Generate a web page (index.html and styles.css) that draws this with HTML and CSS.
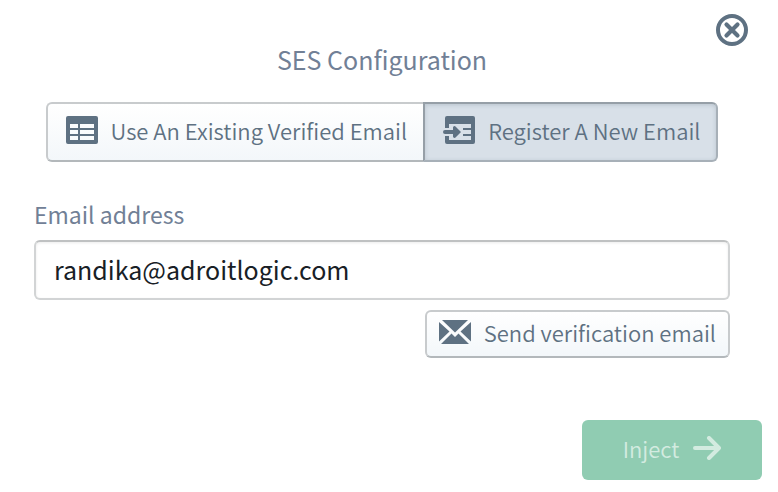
FILE: index.html
```html
<!DOCTYPE html>
<html lang="en">
<head>
<meta charset="utf-8">
<title>SES Configuration</title>
<link rel="stylesheet" href="styles.css">
</head>
<body>
<main class="dialog">
  <button class="close" type="button" aria-label="Close">
    <svg width="32" height="32" viewBox="0 0 32 32" fill="none" stroke="currentColor" stroke-width="4" stroke-linecap="round"><circle cx="16" cy="16" r="14"/><path stroke-width="4.200" d="M10.500 10.500l11 11M21.500 10.500l-11 11"/></svg>
  </button>
  <form class="form">
    <h1 class="title">SES Configuration</h1>
    <div class="tabs">
      <button class="btn tab" type="button" aria-pressed="false">
        <svg width="32" height="28" viewBox="0 0 32 28"><path fill="currentColor" fill-rule="evenodd" d="M2 0h28a2 2 0 0 1 2 2v24a2 2 0 0 1-2 2H2a2 2 0 0 1-2-2V2a2 2 0 0 1 2-2zM4 8v4h8V8zm10 0v4h14V8zM4 14v4h8v-4zm10 0v4h14v-4zM4 20v4h8v-4zm10 0v4h14v-4z"/></svg>
        <span>Use An Existing Verified Email</span>
      </button>
      <button class="btn tab active" type="button" aria-pressed="true">
        <svg width="32" height="28" viewBox="0 0 32 28"><path fill="currentColor" fill-rule="evenodd" d="M4 0h26a2 2 0 0 1 2 2v24a2 2 0 0 1-2 2H4a2 2 0 0 1-2-2v-6h4v4h22v-4h-8v-2h8v-4h-8v-2h8V8H6v4H2V2a2 2 0 0 1 2-2z"/><path fill="currentColor" d="M2 14h8v-2.500a1.500 1.500 0 0 1 2.500-1.100L18 16l-5.500 5.600a1.500 1.500 0 0 1-2.500-1.100V18H2a2 2 0 0 1 0-4z"/></svg>
        <span>Register A New Email</span>
      </button>
    </div>
    <label class="label" for="email">Email address</label>
    <input class="input" id="email" type="email" value="randika@adroitlogic.com">
    <button class="btn send" type="button">
      <svg width="32" height="24" viewBox="0 0 32 24" fill="currentColor"><path d="M3 0h26L16 12.500zM0 2l10.500 9.500L0 21.500zM32 2v19.500l-10.500-10zM2 24l10.500-10.500L16 17l3.500-3.500L30 24z"/></svg>
      <span>Send verification email</span>
    </button>
  </form>
  <button class="inject" type="button" disabled>
    <span>Inject</span>
    <svg width="28" height="24" viewBox="0 0 28 24" fill="none" stroke="currentColor" stroke-width="4" stroke-linecap="round" stroke-linejoin="round"><path d="M2 12h23M16 2l10 10-10 10"/></svg>
  </button>
</main>
</body>
</html>
```
FILE: styles.css
```css
* {
  box-sizing: border-box;
}

body {
  margin: 0;
  background: #fff;
  color: #5e7182;
  font: 400 22px/32px "Noto Sans CJK JP", "Noto Sans", sans-serif;
}

button,
input {
  margin: 0;
  font: inherit;
  color: inherit;
}

button {
  font-weight: 350;
}

svg {
  display: block;
  flex: none;
}

.dialog {
  position: relative;
  display: flex;
  flex-direction: column;
  padding: 43px 16px 12px;
}

.close {
  position: absolute;
  top: 14px;
  right: 30px;
  padding: 0;
  border: 0;
  background: none;
}

.form {
  display: flex;
  flex-direction: column;
  margin: 0 32px 62px 18px;
}

.title {
  margin: 0 0 27px;
  color: #718096;
  font-size: 25px;
  font-weight: 400;
  text-align: center;
}

.tabs {
  display: flex;
  justify-content: center;
  margin-bottom: 36px;
}

.btn {
  display: flex;
  align-items: center;
  gap: 13px;
  border: 2px solid #c8cbcd;
  border-bottom-color: #b3b8bb;
  border-radius: 6px;
  background: linear-gradient(#fff, #f3f7fa);
  white-space: nowrap;
}

.btn span,
.inject span {
  padding-bottom: 4px;
}

.tab {
  height: 60px;
  padding: 0 16px 0 18px;
}

.tab svg {
  margin-bottom: 4px;
}

.tab:first-child {
  border-right: 0;
  border-radius: 6px 0 0 6px;
}

.tab.active {
  border-color: #969fa7 #a7b0b8 #a7b0b8 #969fa7;
  border-radius: 0 6px 6px 0;
  background: #d8e0e8;
  box-shadow: inset 0 1px 4px rgba(60, 80, 100, 0.2);
}

.label {
  margin-bottom: 10px;
  color: #718096;
  font-size: 23px;
}

.input {
  width: 100%;
  height: 60px;
  margin-bottom: 10px;
  padding: 0 18px 2px;
  border: 2px solid #d2d4d5;
  border-top-color: #bfc1c2;
  border-radius: 6px;
  background: #fff;
  box-shadow: inset 0 1px 3px rgba(0, 0, 0, 0.08);
  color: #182026;
  font-size: 25px;
}

.send {
  align-self: flex-end;
  height: 48px;
  padding: 0 12px;
}

.send svg {
  margin-bottom: 4px;
}

.inject {
  display: flex;
  align-self: flex-end;
  align-items: center;
  justify-content: center;
  gap: 14px;
  width: 180px;
  height: 60px;
  border: 0;
  border-radius: 6px;
  background: #90ccb2;
  color: #d3ebe0;
}

.inject svg {
  margin-bottom: 4px;
}
```
